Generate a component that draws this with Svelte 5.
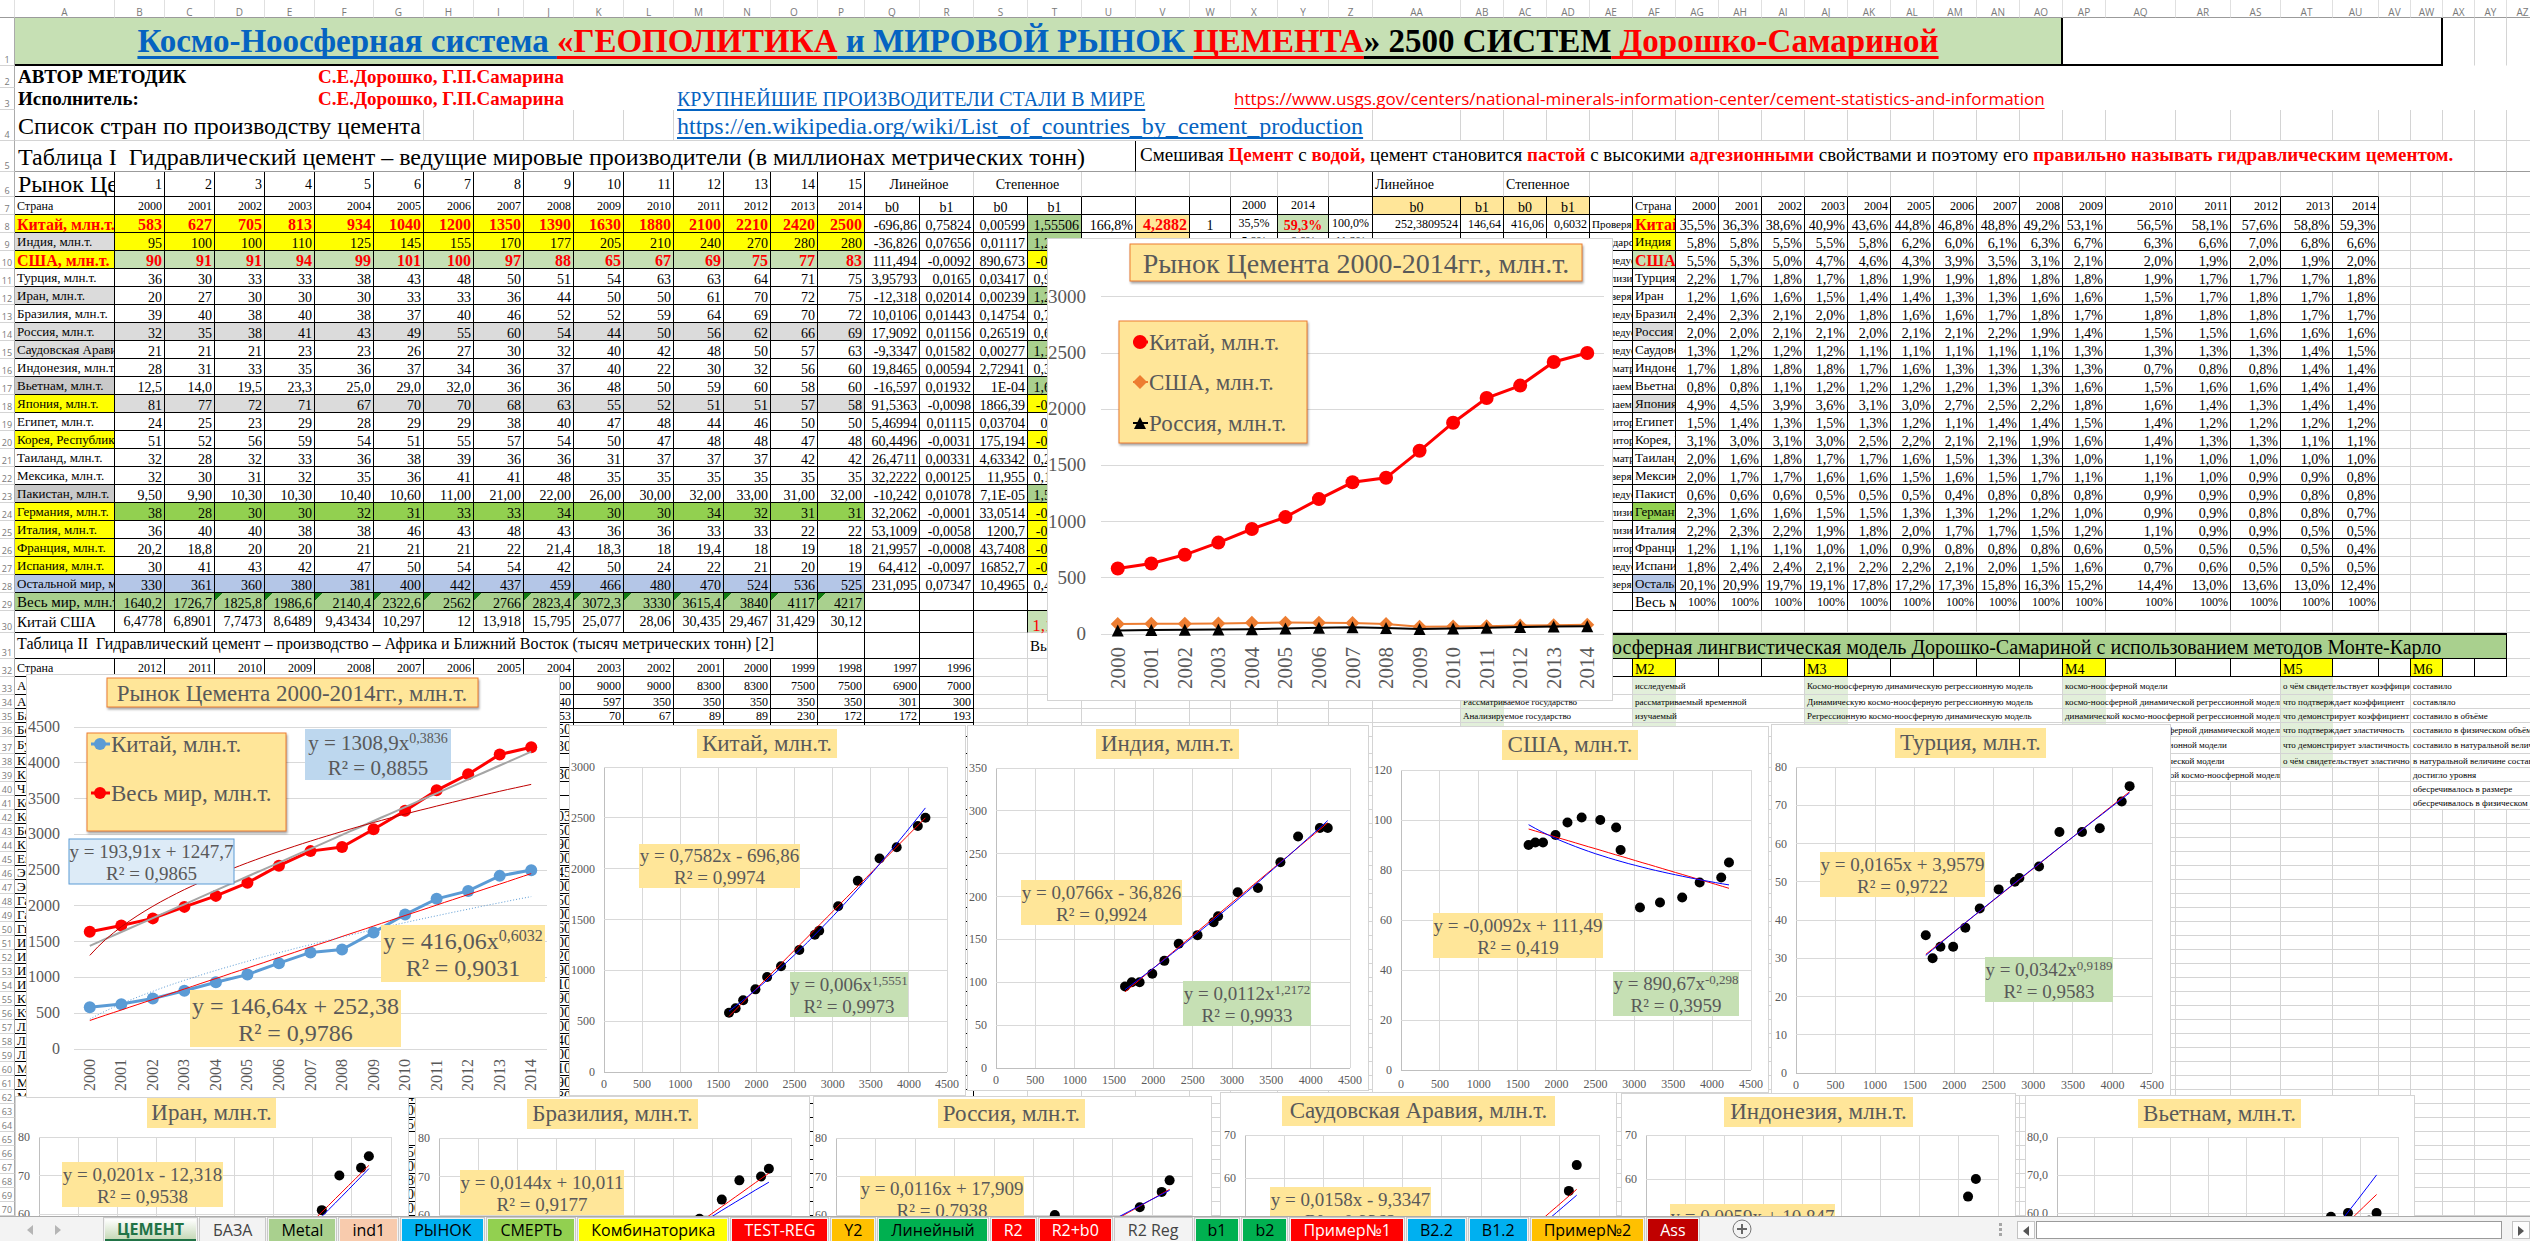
<script lang="ts">
	type Cell = { t?: string; c?: string; span?: number; href?: string };
	type Eq = { x: number; y: number; w: number; h: number; size: number; fill: string; stroke?: string; base: string; sup?: string; r2: string };

	const gutter = 15;
	const colWidths = [
		100, 50, 50, 50, 50, 59, 50, 50, 50, 50, 50, 50, 50, 47, 47, 47, 55, 54, 54, 54, 54, 54, 41, 47, 51, 44,
		88, 43, 43, 43, 43, 43, 43, 43, 43, 43, 43, 43, 43, 43, 43, 43, 70, 55, 50, 52, 46, 32, 32, 32, 32, 32
	];
	const tableWidth = colWidths.reduce((a, b) => a + b, gutter);

	function colName(i: number): string {
		return i < 26 ? String.fromCharCode(65 + i) : 'A' + String.fromCharCode(39 + i);
	}
	const cols = colWidths.map((_, i) => colName(i));
	const colIndex = (name: string) => cols.indexOf(name);

	function rowHeight(r: number): number {
		if (r === 1) return 48;
		if (r <= 3) return 22;
		if (r === 4) return 31;
		if (r === 5) return 31;
		if (r === 6) return 25;
		if (r === 30) return 22;
		if (r === 31) return 26;
		if (r <= 33) return 18;
		if (r === 37) return 17;
		return 14;
	}

	// name, short name, name colour, row colour, short name colour, values, coefficients, b1 colour, note
	const countries: [string, string, string, string, string, string, string, string, string][] = [
		['Китай, млн.т.', 'Китай', 'yellow hot', 'yellow hot', 'yellow hot', '583 627 705 813 934 1040 1200 1350 1390 1630 1880 2100 2210 2420 2500', '-696,86 0,75824 0,00599 1,55506', 'green', 'Проверяемое'],
		['Индия, млн.т.', 'Индия', 'grey', 'yellow', 'yellow', '95 100 100 110 125 145 155 170 177 205 210 240 270 280 280', '-36,826 0,07656 0,01117 1,21721', 'green', 'Государство'],
		['США, млн.т.', 'США', 'yellow hot', 'pale hot', 'pale hot', '90 91 91 94 99 101 100 97 88 65 67 69 75 77 83', '111,494 -0,0092 890,673 -0,2980', 'yellow', 'Исследуемое'],
		['Турция, млн.т.', 'Турция', '', '', '', '36 30 33 33 38 43 48 50 51 54 63 63 64 71 75', '3,95793 0,0165 0,03417 0,91889', '', 'Анализируем'],
		['Иран, млн.т.', 'Иран', 'grey', '', '', '20 27 30 30 30 33 33 36 44 50 50 61 70 72 75', '-12,318 0,02014 0,00239 1,23516', 'green', 'Проверяемое'],
		['Бразилия, млн.т.', 'Бразилия', '', '', '', '39 40 38 40 38 37 40 46 52 52 59 64 69 70 72', '10,0106 0,01443 0,14754 0,73570', '', 'Исследуемое'],
		['Россия, млн.т.', 'Россия', 'grey', 'grey', 'grey', '32 35 38 41 43 49 55 60 54 44 50 56 62 66 69', '17,9092 0,01156 0,26519 0,66172', '', 'Исследуемое'],
		['Саудовская Аравия, млн.т.', 'Саудовская', 'grey', '', '', '21 21 21 23 23 26 27 30 32 40 42 48 50 57 63', '-9,3347 0,01582 0,00277 1,18780', 'green', 'Исследуемое'],
		['Индонезия, млн.т.', 'Индонезия', '', '', '', '28 31 33 35 36 37 34 36 37 40 22 30 32 56 60', '19,8465 0,00594 2,72941 0,33001', '', 'Рассматриваемое'],
		['Вьетнам, млн.т.', 'Вьетнам', 'silver', '', '', '12,5 14,0 19,5 23,3 25,0 29,0 32,0 36 36 48 50 59 60 58 60', '-16,597 0,01932 1E-04 1,61240', 'green', 'Изучаемое'],
		['Япония, млн.т.', 'Япония', 'yellow', 'grey', 'grey', '81 77 72 71 67 70 70 68 63 55 52 51 51 57 58', '91,5363 -0,0098 1866,39 -0,4295', 'yellow', 'Изучаемое'],
		['Египет, млн.т.', 'Египет', '', '', '', '24 25 23 29 28 29 29 38 40 47 48 44 46 50 50', '5,46994 0,01115 0,03704 0,8710', '', 'Мониторинг'],
		['Корея, Республика', 'Корея, Р', 'yellow', '', '', '51 52 56 59 54 51 55 57 54 50 47 48 48 47 48', '60,4496 -0,0031 175,194 -0,1542', 'yellow', 'Мониторинг'],
		['Таиланд, млн.т.', 'Таиланд', '', '', '', '32 28 32 33 36 38 39 36 36 31 37 37 37 42 42', '26,4711 0,00331 4,63342 0,25901', '', 'Рассматриваемое'],
		['Мексика, млн.т.', 'Мексика', '', '', '', '32 30 31 32 35 36 41 41 48 35 35 35 35 35 35', '32,2222 0,00125 11,955 0,14207', '', 'Проверяемое'],
		['Пакистан, млн.т.', 'Пакистан', 'silver', '', '', '9,50 9,90 10,30 10,30 10,40 10,60 11,00 21,00 22,00 26,00 30,00 32,00 33,00 31,00 32,00', '-10,242 0,01078 7,1E-05 1,57702', 'green', 'Исследуемое'],
		['Германия, млн.т.', 'Германия', 'yellow', 'lime', 'lime', '38 28 30 30 32 31 33 33 34 30 30 34 32 31 31', '32,2062 -0,0001 33,0514 -0,0043', 'yellow', 'Анализируем'],
		['Италия, млн.т.', 'Италия', 'yellow', '', '', '36 40 40 38 38 46 43 48 43 36 36 33 33 22 22', '53,1009 -0,0058 1200,7 -0,4422', 'yellow', 'Анализируем'],
		['Франция, млн.т.', 'Франция', 'yellow', '', '', '20,2 18,8 20 20 21 21 21 22 21,4 18,3 18 19,4 18 19 18', '21,9957 -0,0008 43,7408 -0,1007', 'yellow', 'Мониторинг'],
		['Испания, млн.т.', 'Испания', 'yellow', '', '', '30 41 43 42 47 50 54 54 42 50 24 22 21 20 19', '64,412 -0,0097 16852,7 -0,7801', 'yellow', 'Исследуемое'],
		['Остальной мир, млн.т.', 'Остальной', 'blue', 'blue', 'blue', '330 361 360 380 381 400 442 437 459 466 480 470 524 536 525', '231,095 0,07347 10,4965 0,47001', '', 'Проверяемое']
	];

	const num = (s: string) => Number(s.replace(',', '.'));
	const worldText = '1640,2 1726,7 1825,8 1986,6 2140,4 2322,6 2562 2766 2823,4 3072,3 3330 3615,4 3840 4117 4217'.split(' ');
	const world = worldText.map(num);
	const values = countries.map((c) => c[5].split(' ').map(num));
	const years = Array.from({ length: 15 }, (_, i) => 2000 + i);

	const titleParts = [
		['t-blue', 'Космо-Ноосферная система '],
		['t-red', '«ГЕОПОЛИТИКА'],
		['t-blue', ' и МИРОВОЙ РЫНОК '],
		['t-red', 'ЦЕМЕНТА'],
		['t-black', '» 2500 СИСТЕМ'],
		['t-red', ' Дорошко-Самариной']
	];

	const cells: Record<string, Cell> = {};
	function put(col: string, row: number, t: string, c = '', span = 1) {
		cells[col + row] = { t, c, span };
	}
	function putRow(start: string, row: number, list: string[], c: string) {
		const at = colIndex(start);
		list.forEach((t, i) => put(cols[at + i], row, t, c));
	}
	function blank(from: string, to: string, row: number, c: string) {
		for (let i = colIndex(from); i <= colIndex(to); i++) {
			if (!cells[cols[i] + row]) put(cols[i], row, '', c);
		}
	}

	cells.A1 = { span: 41, c: 'title' };
	cells.AP1 = { span: 8, c: 'titlebox' };
	blank('AX', 'AZ', 1, 'bar');
	cells.A2 = { t: 'АВТОР МЕТОДИК', span: 5, c: 'author bare' };
	cells.F2 = { t: 'С.Е.Дорошко, Г.П.Самарина', span: 47, c: 'author red bare' };
	cells.A3 = { t: 'Исполнитель:', span: 5, c: 'author bare' };
	cells.F3 = { t: 'С.Е.Дорошко, Г.П.Самарина', span: 7, c: 'author red bare' };
	cells.M3 = { t: 'КРУПНЕЙШИЕ ПРОИЗВОДИТЕЛИ СТАЛИ В МИРЕ', span: 11, c: 'steel bare', href: '#steel' };
	cells.X3 = { t: 'https://www.usgs.gov/centers/national-minerals-information-center/cement-statistics-and-information', span: 29, c: 'usgs bare', href: 'https://www.usgs.gov/centers/national-minerals-information-center/cement-statistics-and-information' };
	cells.A4 = { t: 'Список стран по производству цемента', span: 7, c: 'big' };
	cells.M4 = { t: 'https://en.wikipedia.org/wiki/List_of_countries_by_cement_production', span: 14, c: 'big', href: 'https://en.wikipedia.org/wiki/List_of_countries_by_cement_production' };
	put('V', 4, '', 'kb');
	cells.A5 = { t: 'Таблица I  Гидравлический цемент – ведущие мировые производители (в миллионах метрических тонн)', span: 21, c: 'big pre freeze kr' };
	cells.V5 = { span: 29, c: 'mix freeze' };
	blank('AY', 'AZ', 5, 'freeze');

	put('A', 6, 'Рынок Цемента', 'big clip k low');
	putRow('B', 6, years.map((_, i) => String(i + 1)), 'n k');
	put('Q', 6, 'Линейное', 'mid kb', 2);
	put('S', 6, 'Степенное', 'mid kb', 2);
	put('AA', 6, 'Линейное', 'left kb', 2);
	put('AC', 6, 'Степенное', 'left kb', 2);
	put('Z', 6, '', 'k');
	blank('U', 'AU', 6, 'kb');

	put('A', 7, 'Страна', 'small k');
	putRow('B', 7, years.map(String), 'year k');
	putRow('Q', 7, ['b0', 'b1', 'b0', 'b1'], 'mid k');
	put('X', 7, '2000', 'year mid k');
	put('Y', 7, '2014', 'year mid k');
	putRow('AA', 7, ['b0', 'b1', 'b0', 'b1'], 'mid cream k');
	put('AF', 7, 'Страна', 'small k');
	putRow('AG', 7, years.map(String), 'year k');
	blank('U', 'AE', 7, 'k');

	countries.forEach((c, i) => {
		const r = 8 + i;
		put('A', r, c[0], `label clip k ${c[2]}`);
		putRow('B', r, c[5].split(' '), `n k ${c[3]}`);
		const coef = c[6].split(' ');
		putRow('Q', r, coef.slice(0, 3), 'n k');
		put('T', r, coef[3], `n k ${c[7]}`);
		put('AE', r, c[8], 'tiny clip k');
		put('AF', r, c[1], `label clip k ${c[4]}`);
		putRow('AG', r, values[i].map((v, j) => ((v / world[j]) * 100).toFixed(1).replace('.', ',') + '%'), 'n k');
	});
	put('U', 8, '166,8%', 'n k');
	put('V', 8, '4,2882', 'n k cream hot');
	put('W', 8, '1', 'mid k');
	put('X', 8, '35,5%', 'year mid k');
	put('Y', 8, '59,3%', 'mid k pale hot14');
	put('Z', 8, '100,0%', 'year mid k');
	putRow('AA', 8, ['252,3809524', '146,64', '416,06', '0,6032'], 'year k');
	put('V', 9, '', 'k cream');
	put('W', 9, '2', 'mid k');
	put('X', 9, '5,8%', 'year mid k');
	put('Y', 9, '6,6%', 'year mid k');
	put('Z', 9, '11,2%', 'year mid k');
	putRow('AA', 9, ['52,12253968', '14,538', '78,154', '0,463'], 'year k');
	for (let r = 9; r <= 29; r++) blank('U', 'AE', r, 'k');

	put('A', 29, 'Весь мир, млн.т.', 'label15 clip k green');
	worldText.forEach((t, i) => put(cols[1 + i], 29, t, `n k green ${i > 1 ? 'flag' : ''}`));
	blank('Q', 'T', 29, 'k');
	put('AF', 29, 'Весь мир', 'label15 clip k');
	putRow('AG', 29, years.map(() => '100%'), 'year k');

	put('A', 30, 'Китай США', 'label15 k');
	putRow('B', 30, '6,4778 6,8901 7,7473 8,6489 9,43434 10,297 12 13,918 15,795 25,077 28,06 30,435 29,467 31,429 30,12'.split(' '), 'n k up');
	blank('Q', 'R', 30, 'k');
	put('S', 30, '', 'kr');
	put('T', 30, '1,1523', 'n pale red15');

	put('A', 31, 'Таблица II  Гидравлический цемент – производство – Африка и Ближний Восток (тысяч метрических тонн) [2]', 'table2 pre k', 15);
	blank('P', 'R', 31, 'k');
	put('T', 31, 'Вывод', 'label15');
	put('AB', 31, 'Космо-Ноосферная лингвистическая модель Дорошко-Самариной с использованием методов Монте-Карло', 'model', 24);

	put('A', 32, 'Страна', 'small k');
	putRow('B', 32, '2012 2011 2010 2009 2008 2007 2006 2005 2004 2003 2002 2001 2000 1999 1998 1997 1996'.split(' '), 'year k');
	put('AB', 32, 'M1', 'left k yellow');
	put('AF', 32, 'M2', 'left k yellow');
	put('AJ', 32, 'M3', 'left k yellow');
	put('AP', 32, 'M4', 'left k yellow');
	put('AT', 32, 'M5', 'left k yellow');
	put('AW', 32, 'M6', 'left k yellow');
	blank('AC', 'AY', 32, 'k');

	const africa = 'Алжир,Ангола,Бахрейн,Бенин,Буркина-Фасо,Камерун,Кабо-Верде,Чад,Конго,Кот-д’Ивуар,Берег,Кипр,Египет,Эритрея,Эфиопия,Габон,Гана,Гвинея,Ирак,Иран,Израиль,Иордания,Кения,Кувейт,Ливан,Либерия,Ливия,Мадагаскар,Малави,Мали'.split(',');
	africa.forEach((t, i) => put('A', 33 + i, t, 'label k clip'));
	putRow('J', 33, '8800 9000 9000 8300 8300 7500 7500 6900 7000'.split(' '), 'year k');
	putRow('J', 34, '740 597 350 350 350 350 350 301 300'.split(' '), 'year k');
	putRow('J', 35, '153 70 67 89 89 230 172 172 193'.split(' '), 'year k');
	'250,30,,930,,,103,650,390,800,2845,100,450,1900,360,200,520,390,110,290,500,3900,140,400,110,190,180'.split(',')
		.forEach((t, i) => put('J', 36 + i, t, 'n k'));
	'140,100,150,,250,600,180,200,500'.split(',').forEach((t, i) => put('G', 62 + i, t, 'n k'));
	for (let r = 33; r <= 70; r++) blank('B', 'R', r, 'k');

	const words: Record<string, string[]> = {
		AB: ['Изучаемое государство', 'Рассматриваемое государство', 'Анализируемое государство', ''],
		AF: ['исследуемый', 'рассматриваемый временной', 'изучаемый', 'анализируемый'],
		AJ: ['Космо-ноосферную динамическую регрессионную модель', 'Динамическую космо-ноосферную регрессионную модель', 'Регрессионную космо-ноосферную динамическую модель', ''],
		AP: ['космо-ноосферной модели', 'космо-ноосферной динамической регрессионной модели', 'динамической космо-ноосферной регрессионной модели', 'регрессионной космо-ноосферной динамической модели', 'космо-ноосферной регрессионной модели', 'космо-ноосферной динамической модели', 'динамической регрессионной космо-ноосферной модели'],
		AT: ['о чём свидетельствует коэффициент', 'что подтверждает коэффициент', 'что демонстрирует коэффициент', 'что подтверждает эластичность', 'что демонстрирует эластичность', 'о чём свидетельствует эластичность'],
		AW: ['составило', 'составляло', 'составило в объёме', 'составило в физическом объёме', 'составило в натуральной величине', 'в натуральной величине составило', 'достигло уровня', 'обесречивалось в размере', 'обесречивалось в физическом объёме']
	};
	const wordSpan: Record<string, number> = { AB: 4, AF: 4, AJ: 6, AP: 4, AT: 3, AW: 4 };
	for (const [col, list] of Object.entries(words)) {
		list.forEach((t, i) => {
			let tint = '';
			if (col === 'AT') tint = 'mint52';
			else if (col !== 'AW' && i < 4) tint = 'mint43';
			put(col, 33 + i, t, `word clip ${tint}`, wordSpan[col]);
		});
	}

	const rows = Array.from({ length: 70 }, (_, i) => {
		const r = i + 1;
		const list: Cell[] = [];
		for (let c = 0; c < cols.length; ) {
			const cell = cells[cols[c] + r] ?? {};
			list.push(cell);
			c += cell.span ?? 1;
		}
		return { r, list };
	});

	const scale = (a: number, b: number, pa: number, pb: number) => (v: number) => pa + ((v - a) / (b - a)) * (pb - pa);
	const pathOf = (pts: number[][]) => pts.map(([x, y], i) => `${i ? 'L' : 'M'}${x.toFixed(1)} ${y.toFixed(1)}`).join('');

	function lineChart(o: { left: number; right: number; y0: number; step: number; unit: number; count: number }) {
		const slot = (o.right - o.left) / 15;
		const px = (i: number) => o.left + slot * (i + 0.5);
		const py = (v: number) => o.y0 - (v / o.unit) * o.step;
		return {
			...o,
			px,
			py,
			ticks: Array.from({ length: o.count + 1 }, (_, i) => i * o.unit),
			line: (vals: number[]) => pathOf(vals.map((v, i) => [px(i), py(v)])),
			curve: (f: (n: number) => number) => pathOf(Array.from({ length: 57 }, (_, i) => [px(i / 4), py(f(1 + i / 4))]))
		};
	}
	const big = lineChart({ left: 1101, right: 1604, y0: 634, step: 56.2, unit: 500, count: 6 });
	const both = lineChart({ left: 74, right: 547, y0: 1049, step: 35.77, unit: 500, count: 9 });

	const CREAM = '#ffe699';
	const GREEN = '#c6e0b4';

	type Scatter = {
		name: string; box: number[]; title: number[]; plot: number[]; ymax: number; ystep: number; ymin: number; row: number;
		a: number; b: number; p: number; q: number; tickY: number; dec?: string; eqs: Eq[];
	};
	const eq = (x: number, y: number, w: number, h: number, fill: string, base: string, r2: string, sup = ''): Eq => ({ x, y, w, h, size: 19, fill, base, sup, r2 });

	// plot: left, right, top, y of ymin
	const scatters: Scatter[] = [
		{ name: 'Иран', box: [15, 1096, 394, 300], title: [147, 1098, 129, 30], plot: [39, 391, 1137, 1214], ymax: 80, ymin: 60, ystep: 10, row: 4, a: -12.318, b: 0.02014, p: 0.00239, q: 1.2352, tickY: 0, eqs: [eq(62, 1162, 161, 45, CREAM, 'y = 0,0201x - 12,318', '0,9538')] },
		{ name: 'Бразилия', box: [415, 1096, 395, 300], title: [527, 1099, 171, 30], plot: [439, 791, 1138, 1215], ymax: 80, ymin: 60, ystep: 10, row: 5, a: 10.0106, b: 0.01443, p: 0.14754, q: 0.7357, tickY: 0, eqs: [eq(460, 1170, 164, 45, CREAM, 'y = 0,0144x + 10,011', '0,9177')] },
		{ name: 'Россия', box: [813, 1096, 399, 300], title: [938, 1099, 147, 29], plot: [836, 1192, 1138, 1215], ymax: 80, ymin: 60, ystep: 10, row: 6, a: 17.909, b: 0.01156, p: 0.26519, q: 0.6617, tickY: 0, eqs: [eq(860, 1176, 164, 46, CREAM, 'y = 0,0116x + 17,909', '0,7938')] },
		{ name: 'Саудовская Аравия', box: [1220, 1092, 397, 300], title: [1282, 1096, 273, 30], plot: [1245, 1599, 1135, 1178], ymax: 70, ymin: 60, ystep: 10, row: 7, a: -9.3347, b: 0.01582, p: 0.00277, q: 1.1878, tickY: 0, eqs: [eq(1270, 1187, 161, 45, CREAM, 'y = 0,0158x - 9,3347', '0,9362')] },
		{ name: 'Вьетнам', box: [2025, 1095, 390, 300], title: [2138, 1099, 163, 29], plot: [2057, 2398, 1137, 1213], ymax: 80, ymin: 60, ystep: 10, row: 9, a: -16.597, b: 0.01932, p: 0.0001, q: 1.6125, tickY: 0, dec: ',0', eqs: [] },
		{ name: 'Китай', box: [569, 725, 397, 371], title: [697, 729, 140, 29], plot: [604, 947, 767, 1072], ymax: 3000, ymin: 0, ystep: 500, row: 0, a: -696.86, b: 0.75824, p: 0.00599, q: 1.5551, tickY: 1084, eqs: [eq(639, 844, 161, 44, CREAM, 'y = 0,7582x - 696,86', '0,9974'), eq(790, 972, 118, 45, GREEN, 'y = 0,006x', '0,9973', '1,5551')] },
		{ name: 'Индия', box: [967, 725, 402, 366], title: [1096, 729, 143, 30], plot: [996, 1350, 768, 1068], ymax: 350, ymin: 0, ystep: 50, row: 1, a: -36.826, b: 0.07656, p: 0.01117, q: 1.2172, tickY: 1080, eqs: [eq(1021, 880, 161, 45, CREAM, 'y = 0,0766x - 36,826', '0,9924'), eq(1183, 981, 128, 45, GREEN, 'y = 0,0112x', '0,9933', '1,2172')] },
		{ name: 'США', box: [1372, 726, 397, 367], title: [1502, 730, 136, 30], plot: [1401, 1751, 770, 1070], ymax: 120, ymin: 0, ystep: 20, row: 2, a: 111.494, b: -0.0092, p: 890.67, q: -0.298, tickY: 1084, eqs: [eq(1433, 913, 170, 45, CREAM, 'y = -0,0092x + 111,49', '0,419'), eq(1613, 972, 126, 44, GREEN, 'y = 890,67x', '0,3959', '-0,298')] },
		{ name: 'Турция', box: [1771, 724, 400, 372], title: [1895, 728, 151, 30], plot: [1796, 2152, 767, 1073], ymax: 80, ymin: 0, ystep: 10, row: 3, a: 3.95793, b: 0.0165, p: 0.03417, q: 0.9189, tickY: 1085, eqs: [eq(1820, 852, 165, 45, CREAM, 'y = 0,0165x + 3,9579', '0,9722'), eq(1985, 957, 128, 45, GREEN, 'y = 0,0342x', '0,9583', '0,9189')] },
		{ name: 'Индонезия', box: [1621, 1093, 395, 300], title: [1724, 1097, 189, 30], plot: [1646, 1998, 1135, 1179], ymax: 70, ymin: 60, ystep: 10, row: 8, a: 19.8465, b: 0.00594, p: 2.72941, q: 0.33, tickY: 0, eqs: [eq(1670, 1204, 165, 45, CREAM, 'y = 0,0059x + 10,847', '0,1801')] }
	];

	function scatterGeometry(s: Scatter) {
		const fx = scale(0, 4500, s.plot[0], s.plot[1]);
		const fy = scale(s.ymin, s.ymax, s.plot[3], s.plot[2]);
		const bottom = s.ymin === 0 ? s.plot[3] : s.box[1] + s.box[3];
		const yTicks = [];
		for (let v = s.ymax; v >= s.ymin; v -= s.ystep) yTicks.push(v);
		const curve = (f: (x: number) => number) => pathOf(Array.from({ length: 31 }, (_, i) => {
			const x = world[0] + ((world[14] - world[0]) * i) / 30;
			return [fx(x), fy(f(x))];
		}));
		return {
			fx, fy, bottom, yTicks,
			xTicks: Array.from({ length: 10 }, (_, i) => i * 500),
			linear: curve((x) => s.a + s.b * x),
			power: curve((x) => s.p * x ** s.q)
		};
	}

	const tabs = [
		['ЦЕМЕНТ', ''], ['БАЗА', ''], ['Metal', '#a9d08e'], ['ind1', '#f8cbad'], ['РЫНОК', '#00b0f0'], ['СМЕРТЬ', '#92d050'],
		['Комбинаторика', '#ffff00'], ['TEST-REG', '#ff0000'], ['Y2', '#ffc000'], ['Линейный', '#00b050'], ['R2', '#ff0000'],
		['R2+b0', '#ff0000'], ['R2 Reg', ''], ['b1', '#00b050'], ['b2', '#00b050'], ['Пример№1', '#ff0000'], ['B2.2', '#00b0f0'],
		['B1.2', '#00b0f0'], ['Пример№2', '#ffc000'], ['Ass', '#c00000']
	];
	let active = $state('ЦЕМЕНТ');
	const isDark = (color: string) => color === '#ff0000' || color === '#c00000';
</script>

{#snippet equation(e: Eq)}
	<rect x={e.x} y={e.y} width={e.w} height={e.h} fill={e.fill} stroke={e.stroke ?? 'none'} />
	<text x={e.x + e.w / 2} y={e.y + e.h * 0.42} font-size={e.size} text-anchor="middle">{e.base}{#if e.sup}<tspan font-size={Math.round(e.size * 0.66)} dy={-Math.round(e.size * 0.33)}>{e.sup}</tspan>{/if}</text>
	<text x={e.x + e.w / 2} y={e.y + e.h * 0.9} font-size={e.size} text-anchor="middle">R² = {e.r2}</text>
{/snippet}

{#snippet dots(pts: number[][], color: string, r: number)}
	{#each pts as [x, y]}<circle cx={x} cy={y} {r} fill={color} />{/each}
{/snippet}

<div class="book">
	<div class="sheet">
		<table style:width="{tableWidth}px">
			<colgroup>
				<col style:width="{gutter}px" />
				{#each colWidths as w}<col style:width="{w}px" />{/each}
			</colgroup>
			<thead>
				<tr class="letters">
					<th></th>
					{#each cols as c}<th scope="col">{c}</th>{/each}
				</tr>
			</thead>
			<tbody>
				{#each rows as { r, list }}
					<tr style:height="{rowHeight(r)}px">
						<th scope="row">{r}</th>
						{#each list as cell}
							<td class={cell.c} colspan={cell.span ?? 1}>
								{#if cell.c === 'title'}
									{#each titleParts as [tone, text]}<span class={tone}>{text}</span>{/each}
								{:else if cell.c === 'mix freeze'}
									Смешивая <b>Цемент</b> с <b>водой,</b> цемент становится <b>пастой</b> с высокими <b>адгезионными</b> свойствами и поэтому его <b>правильно называть гидравлическим цементом.</b>
								{:else if cell.href}
									<a href={cell.href}>{cell.t}</a>
								{:else}{cell.t ?? ''}{/if}
							</td>
						{/each}
					</tr>
				{/each}
			</tbody>
		</table>

		{#each scatters as s}
			{@const g = scatterGeometry(s)}
			<svg class="chart" style:left="{s.box[0]}px" style:top="{s.box[1]}px" width={s.box[2]} height={s.box[3]} viewBox={s.box.join(' ')} role="img" aria-label="{s.name}, млн.т.">
				{#each g.xTicks as t}
					<line x1={g.fx(t)} x2={g.fx(t)} y1={s.plot[2]} y2={g.bottom} class="grid" class:axis={t === 0} />
					{#if s.tickY}<text x={g.fx(t)} y={s.tickY + 4} font-size="12" text-anchor="middle">{t}</text>{/if}
				{/each}
				{#each g.yTicks as t}
					<line x1={s.plot[0]} x2={s.plot[1]} y1={g.fy(t)} y2={g.fy(t)} class="grid" class:axis={t === 0} />
					<text x={s.plot[0] - 9} y={g.fy(t) + 4} font-size="12" text-anchor="end">{t}{s.dec ?? ''}</text>
				{/each}
				{@render dots(values[s.row].map((v, i) => [g.fx(world[i]), g.fy(v)]), '#000', 5)}
				<path d={g.linear} class="fit" stroke="#ff0000" />
				<path d={g.power} class="fit" stroke="#0000ff" />
				{#each s.eqs as e}{@render equation(e)}{/each}
				<rect x={s.title[0]} y={s.title[1]} width={s.title[2]} height={s.title[3]} fill={CREAM} />
				<text x={s.title[0] + s.title[2] / 2} y={s.title[1] + 22} font-size="23" text-anchor="middle">{s.name}, млн.т.</text>
			</svg>
		{/each}

		<svg class="chart" style:left="26px" style:top="674px" width="534" height="424" viewBox="26 674 534 424" role="img" aria-label="Китай и весь мир">
			{#each both.ticks as t}
				<line x1={both.left} x2={both.right} y1={both.py(t)} y2={both.py(t)} class="grid" />
				<text x="60" y={both.py(t) + 5} font-size="16" text-anchor="end">{t}</text>
			{/each}
			{#each years as y, i}
				<text transform="translate({both.px(i) + 5} 1091) rotate(-90)" font-size="16">{y}</text>
			{/each}
			<path d={both.line(values[0])} class="series" stroke="#5b9bd5" />
			{@render dots(values[0].map((v, i) => [both.px(i), both.py(v)]), '#5b9bd5', 6)}
			<path d={both.line(world)} class="series" stroke="#ff0000" />
			{@render dots(world.map((v, i) => [both.px(i), both.py(v)]), '#ff0000', 6)}
			<path d={both.curve((n) => 146.64 * n + 252.38)} class="fit" stroke="#ff0000" />
			<path d={both.curve((n) => 416.06 * n ** 0.6032)} class="fit dotted" stroke="#5b9bd5" />
			<path d={both.curve((n) => 193.91 * n + 1247.7)} class="thin" stroke="#a5a5a5" />
			<path d={both.curve((n) => 1308.9 * n ** 0.3836)} class="fit" stroke="#c00000" />
			<rect x="107" y="678" width="371" height="29" class="framed" />
			<text x="292" y="701" font-size="23" text-anchor="middle">Рынок Цемента 2000-2014гг., млн.т.</text>
			<rect x="87" y="733" width="199" height="98" class="framed" />
			<path d="M91 744h19" stroke="#5b9bd5" class="series" />
			<circle cx="100" cy="744" r="6" fill="#5b9bd5" />
			<text x="111" y="752" font-size="23">Китай, млн.т.</text>
			<path d="M91 793h19" stroke="#ff0000" class="series" />
			<circle cx="100" cy="793" r="6" fill="#ff0000" />
			<text x="111" y="801" font-size="23">Весь мир, млн.т.</text>
			{@render equation({ x: 305, y: 729, w: 146, h: 51, size: 21, fill: '#bdd7ee', base: 'y = 1308,9x', sup: '0,3836', r2: '0,8855' })}
			{@render equation({ x: 69, y: 839, w: 165, h: 45, size: 19, fill: '#ddebf7', stroke: '#5b9bd5', base: 'y = 193,91x + 1247,7', r2: '0,9865' })}
			{@render equation({ x: 381, y: 925, w: 164, h: 57, size: 24, fill: CREAM, base: 'y = 416,06x', sup: '0,6032', r2: '0,9031' })}
			{@render equation({ x: 190, y: 990, w: 211, h: 57, size: 24, fill: CREAM, base: 'y = 146,64x + 252,38', r2: '0,9786' })}
		</svg>

		<svg class="chart" style:left="1047px" style:top="238px" width="566" height="463" viewBox="1047 238 566 463" role="img" aria-label="Рынок Цемента 2000-2014гг., млн.т.">
			{#each big.ticks as t}
				<line x1={big.left} x2={big.right} y1={big.py(t)} y2={big.py(t)} class="grid" />
				<text x="1086" y={big.py(t) + 6} font-size="19" text-anchor="end">{t}</text>
			{/each}
			{#each years as y, i}
				<text transform="translate({big.px(i) + 7} 689) rotate(-90)" font-size="21">{y}</text>
			{/each}
			<path d={big.line(values[0])} class="series" stroke="#ff0000" />
			{@render dots(values[0].map((v, i) => [big.px(i), big.py(v)]), '#ff0000', 7)}
			<path d={big.line(values[2])} class="thin" stroke="#ed7d31" />
			{#each values[2] as v, i}
				<path d="M{big.px(i)} {big.py(v) - 7}l7 7l-7 7l-7 -7z" fill="#ed7d31" />
			{/each}
			<path d={big.line(values[6])} class="thin" stroke="#000" />
			{#each values[6] as v, i}
				<path d="M{big.px(i)} {big.py(v) - 6}l6 12h-12z" fill="#000" />
			{/each}
			<rect x="1130" y="244" width="452" height="37" class="framed" />
			<text x="1356" y="273" font-size="28" text-anchor="middle">Рынок Цемента 2000-2014гг., млн.т.</text>
			<rect x="1119" y="321" width="188" height="122" class="framed" />
			<path d="M1133 342h15" class="series" stroke="#ff0000" />
			<circle cx="1140" cy="342" r="7" fill="#ff0000" />
			<text x="1149" y="350" font-size="23">Китай, млн.т.</text>
			<path d="M1133 382h15" class="thin" stroke="#ed7d31" />
			<path d="M1140 375l7 7l-7 7l-7 -7z" fill="#ed7d31" />
			<text x="1149" y="390" font-size="23">США, млн.т.</text>
			<path d="M1133 423h15" class="thin" stroke="#000" />
			<path d="M1140 417l6 12h-12z" fill="#000" />
			<text x="1149" y="431" font-size="23">Россия, млн.т.</text>
		</svg>
	</div>

	<footer>
		<div class="nav">
			<button aria-label="Предыдущий лист"><svg width="6" height="10" viewBox="0 0 6 10"><path d="M6 0v10L0 5z" fill="#b5b5b5" /></svg></button>
			<button aria-label="Следующий лист"><svg width="6" height="10" viewBox="0 0 6 10"><path d="M0 0v10L6 5z" fill="#b5b5b5" /></svg></button>
		</div>
		<div class="tabs">
			{#each tabs as [name, color]}
				<button class="tab" class:active={active === name} class:dark={isDark(color)} class:plain={!color} style:background-color={active === name ? null : color || null} onclick={() => (active = name)}>{name}</button>
			{/each}
		</div>
		<button class="add" aria-label="Новый лист">
			<svg width="20" height="20" viewBox="0 0 20 20"><circle cx="10" cy="10" r="9" fill="none" stroke="#777" /><path d="M5 10h10M10 5v10" stroke="#666" stroke-width="2" /></svg>
		</button>
		<span class="grip"></span>
		<div class="scroll">
			<button aria-label="Влево"><svg width="6" height="10" viewBox="0 0 6 10"><path d="M6 0v10L0 5z" fill="#555" /></svg></button>
			<div class="track"></div>
			<button aria-label="Вправо"><svg width="6" height="10" viewBox="0 0 6 10"><path d="M0 0v10L6 5z" fill="#555" /></svg></button>
		</div>
	</footer>
</div>

<style>
	:global(body) {
		margin: 0;
		background: #fff;
	}

	.book {
		display: flex;
		flex-direction: column;
		height: 100vh;
		font-family: "Liberation Serif", serif;
		color: #000;
	}

	.sheet {
		position: relative;
		flex: 1;
		min-height: 0;
		overflow: hidden;
	}

	table {
		table-layout: fixed;
		border-collapse: separate;
		border-spacing: 0;
	}

	th {
		box-sizing: border-box;
		padding: 0;
		font: 10px "Open Sans", sans-serif;
		line-height: 10px;
		color: #7a7a7a;
		vertical-align: bottom;
		overflow: hidden;
	}

	.letters {
		height: 18px;
	}

	.letters th {
		border-right: 1px solid #e0e0e0;
		border-bottom: 1px solid #9b9b9b;
	}

	tbody th {
		border-right: 1px solid #ababab;
		border-bottom: 1px solid #d4d4d4;
		font-size: 9px;
	}

	td {
		box-sizing: border-box;
		padding: 0 2px;
		border-right: 1px solid #d4d4d4;
		border-bottom: 1px solid #d4d4d4;
		font-size: 14px;
		line-height: 12px;
		white-space: nowrap;
		vertical-align: bottom;
	}

	.clip {
		overflow: hidden;
	}

	.pre {
		white-space: pre;
	}

	.k {
		border-right-color: #000;
		border-bottom-color: #000;
	}

	.kb {
		border-bottom-color: #000;
	}

	.kr {
		border-right-color: #000;
	}

	.bare {
		border-color: transparent;
	}

	.bar {
		border-bottom-color: transparent;
	}

	.freeze {
		border-bottom-color: #9b9b9b;
	}

	.n {
		text-align: right;
		line-height: 13px;
	}

	.mid {
		text-align: center;
		line-height: 13px;
	}

	.left {
		line-height: 13px;
	}

	.year {
		font-size: 12px;
		text-align: right;
		vertical-align: middle;
	}

	.year.mid {
		text-align: center;
	}

	tr:nth-child(6) .n,
	tr:nth-child(6) .mid,
	tr:nth-child(6) .left,
	.n.up {
		vertical-align: middle;
	}

	.small {
		font-size: 12px;
		vertical-align: middle;
	}

	.tiny {
		font-size: 11px;
		vertical-align: middle;
	}

	.label {
		font-size: 13px;
		vertical-align: middle;
	}

	.label15 {
		font-size: 15px;
		line-height: 16px;
		vertical-align: middle;
	}

	.hot {
		color: #ff0000;
		font-weight: bold;
		font-size: 16px;
		vertical-align: bottom;
		line-height: 14px;
	}

	.hot14 {
		color: #ff0000;
		font-weight: bold;
	}

	.red15 {
		color: #ff0000;
		font-size: 17px;
	}

	.yellow {
		background-color: #ffff00;
	}

	.grey {
		background-color: #dbdbdb;
	}

	.silver {
		background-color: #c9c9c9;
	}

	.pale {
		background-color: #c6e0b4;
	}

	.green {
		background-color: #a9d08e;
	}

	.lime {
		background-color: #92d050;
	}

	.blue {
		background-color: #b4c6e7;
	}

	.cream {
		background-color: #ffe699;
	}

	.flag {
		background-image: linear-gradient(135deg, #107c10 5px, transparent 5px);
	}

	.title {
		background: #c6e0b4;
		border-right: 2px solid #000;
		border-bottom: 2px solid #000;
		font-size: 33px;
		font-weight: bold;
		line-height: 40px;
		text-align: center;
		vertical-align: middle;
	}

	.title span {
		white-space: pre;
		text-decoration: underline;
		text-decoration-thickness: 3px;
		text-underline-offset: 4px;
		text-decoration-skip-ink: none;
	}

	.t-blue {
		color: #0563c1;
	}

	.t-red {
		color: #ff0000;
	}

	.t-black {
		color: #000;
	}

	.titlebox {
		border-right: 2px solid #000;
		border-bottom: 2px solid #000;
	}

	.author {
		padding-left: 3px;
		font-size: 19px;
		font-weight: bold;
		line-height: 20px;
	}

	.red {
		color: #ff0000;
	}

	.steel {
		padding-left: 3px;
		font-size: 20px;
		line-height: 20px;
	}

	.usgs {
		padding-left: 3px;
		font-family: "Open Sans", sans-serif;
		font-size: 17px;
		line-height: 20px;
	}

	a {
		color: #0563c1;
		text-decoration-skip-ink: none;
		text-underline-offset: 3px;
	}

	.usgs a {
		color: #ff0000;
	}

	.big {
		padding-left: 3px;
		font-size: 24px;
		line-height: 28px;
	}

	.big.low {
		line-height: 24px;
	}

	.mix {
		padding-left: 4px;
		font-size: 19px;
		line-height: 28px;
		vertical-align: top;
	}

	.mix b {
		color: #ff0000;
	}

	.table2 {
		font-size: 16px;
		line-height: 22px;
		vertical-align: top;
	}

	.model {
		background: #a9d08e;
		border: 1px solid #000;
		border-top-width: 2px;
		font-size: 20px;
		line-height: 22px;
		text-align: center;
	}

	.word {
		font-size: 9px;
		line-height: 10px;
		vertical-align: middle;
	}

	.mint43 {
		background: linear-gradient(90deg, #e2efda 43px, transparent 43px);
	}

	.mint52 {
		background: linear-gradient(90deg, #e2efda 52px, transparent 52px);
	}

	.chart {
		position: absolute;
		box-sizing: border-box;
		background: #fff;
		outline: 1px solid #d4d4d4;
		outline-offset: -1px;
	}

	.chart text {
		fill: #595959;
	}

	.grid {
		stroke: #d9d9d9;
		shape-rendering: crispEdges;
	}

	.axis {
		stroke: #bfbfbf;
	}

	.fit {
		fill: none;
		stroke-width: 1;
	}

	.dotted {
		stroke-dasharray: 1 2;
	}

	.series {
		fill: none;
		stroke-width: 3;
	}

	.thin {
		fill: none;
		stroke-width: 2;
	}

	.framed {
		fill: #ffe699;
		stroke: #ed7d31;
		filter: drop-shadow(1px 2px 1px rgba(0, 0, 0, 0.35));
	}

	footer {
		display: flex;
		align-items: center;
		height: 24px;
		border-top: 1px solid #ababab;
		background: #f3f3f3;
		font-family: "Open Sans", sans-serif;
	}

	button {
		border: 0;
		padding: 0;
		background: transparent;
		font: inherit;
		color: inherit;
		cursor: pointer;
		line-height: 1;
	}

	.nav {
		display: flex;
		gap: 22px;
		width: 78px;
		padding-left: 27px;
	}

	.tabs {
		display: flex;
		align-self: stretch;
		gap: 5px;
	}

	.tab {
		margin-top: 2px;
		padding: 0 12px;
		font-size: 16px;
		line-height: 17px;
		color: #000;
		white-space: nowrap;
		outline: 1px solid #c9c9c9;
		outline-offset: 1px;
	}

	.tab.dark {
		color: #fff;
	}

	.tab.plain {
		color: #444;
	}

	.tab.active {
		border-bottom: 2px solid #217346;
		background: linear-gradient(#fff, #c6d9b8);
		font-weight: bold;
		color: #217346;
	}

	.add {
		margin-left: 34px;
		display: flex;
	}

	.grip {
		margin-left: auto;
		height: 13px;
		border-left: 3px dotted #a6a6a6;
	}

	.scroll {
		display: flex;
		align-self: stretch;
		gap: 1px;
		width: 513px;
		margin-left: 15px;
		padding: 4px 0 2px;
		box-sizing: border-box;
	}

	.scroll button {
		width: 18px;
		border: 1px solid #c3c3c3;
		background: #fdfdfd;
	}

	.track {
		flex: 1;
		margin-right: 9px;
		border: 1px solid #9b9b9b;
		background: #fff;
	}
</style>
